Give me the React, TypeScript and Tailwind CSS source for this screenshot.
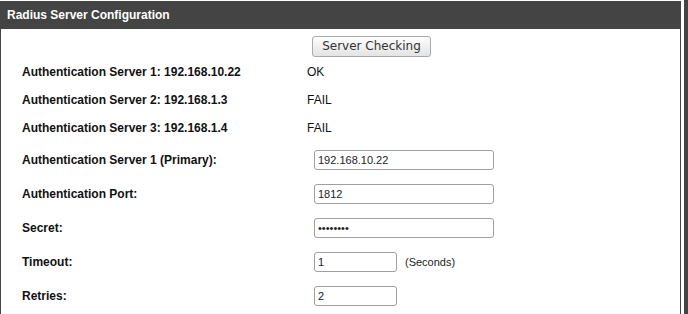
import React from 'react'

const statusRows = [
  { label: 'Authentication Server 1: 192.168.10.22', value: 'OK' },
  { label: 'Authentication Server 2: 192.168.1.3', value: 'FAIL' },
  { label: 'Authentication Server 3: 192.168.1.4', value: 'FAIL' },
]

function Field({
  label,
  value,
  type = 'text',
  short,
  suffix,
}: {
  label: string
  value: string
  type?: string
  short?: boolean
  suffix?: string
}) {
  return (
    <div className="flex h-[34px] items-center">
      <div className="w-[313px] shrink-0 pl-[21px] text-[12px] font-bold text-[#111]">{label}</div>
      <input
        type={type}
        readOnly
        value={value}
        className={
          (short ? 'w-[83px]' : 'w-[180px]') +
          ' h-[20px] rounded-[3px] border border-[#a0a0a0] bg-white pl-[3px] text-[11px] text-[#222] outline-none'
        }
      />
      {suffix && <span className="ml-[8px] text-[11px] text-[#222]">{suffix}</span>}
    </div>
  )
}

export default function App() {
  return (
    <div className="flex h-[314px] w-[688px] overflow-hidden bg-white font-['Liberation_Sans',Arial,sans-serif]">
      <div className="mt-[1px] flex w-[681px] flex-col">
        <div className="flex h-[28px] items-center bg-[#444] pl-[7px] text-[12px] font-bold text-white">
          Radius Server Configuration
        </div>
        <div className="flex-1 border-x border-[#444]">
          <div className="h-[29px] pt-[4px] pl-[311px]">
            <button className="h-[21px] w-[119px] rounded-[3px] border border-[#aaa] bg-gradient-to-b from-[#fdfdfd] to-[#e4e4e4] font-['DejaVu_Sans',sans-serif] text-[12px] text-[#333]">
              Server Checking
            </button>
          </div>
          {statusRows.map((r) => (
            <div key={r.label} className="flex h-[28px] items-center">
              <div className="w-[306px] shrink-0 pl-[21px] text-[12px] font-bold text-[#111]">{r.label}</div>
              <div className="text-[12px] text-[#111]">{r.value}</div>
            </div>
          ))}
          <div className="mt-[1px]">
            <Field label="Authentication Server 1 (Primary):" value="192.168.10.22" />
            <Field label="Authentication Port:" value="1812" />
            <Field label="Secret:" value="12345678" type="password" />
            <Field label="Timeout:" value="1" short suffix="(Seconds)" />
            <Field label="Retries:" value="2" short />
          </div>
        </div>
      </div>
      <div className="ml-[3px] w-[4px] bg-[#444]" />
    </div>
  )
}
